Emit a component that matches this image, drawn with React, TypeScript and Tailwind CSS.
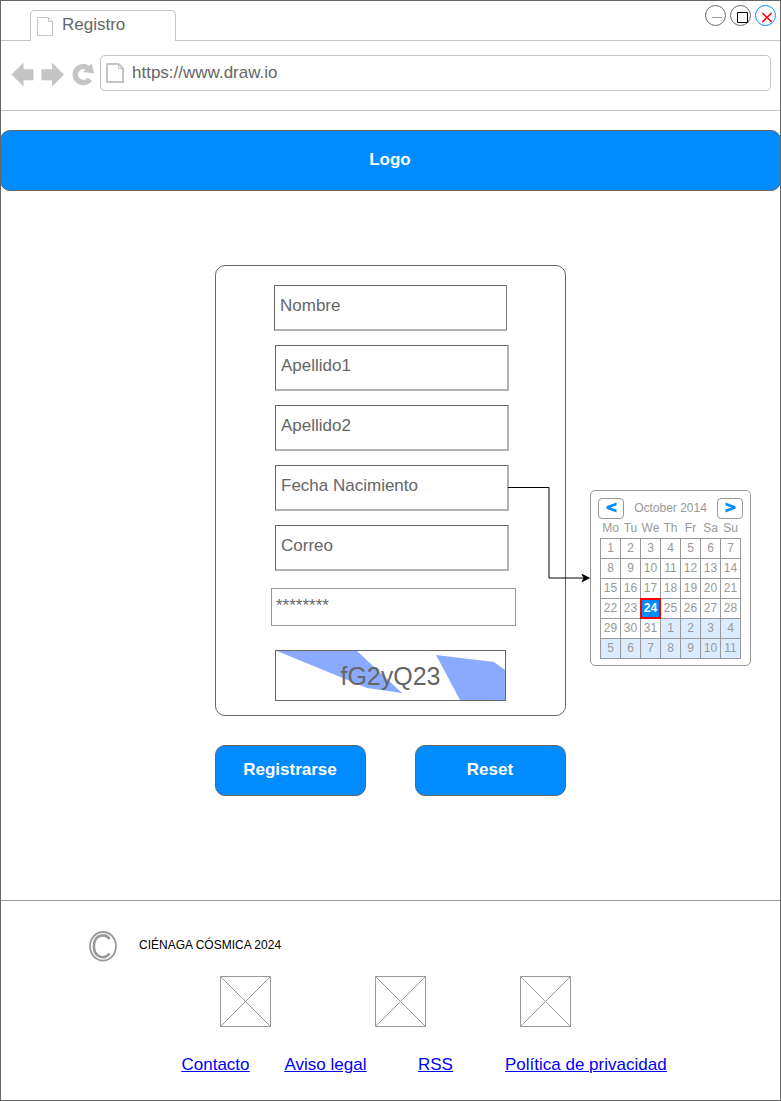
import React from "react";

const Page = ({ className, thick }: { className: string; thick?: boolean }) => (
  <svg className={className} viewBox={thick ? "0 0 18 20" : "0 0 16 19"} fill="none" stroke="#c4c4c4">
    {thick ? (
      <>
        <path d="M1 1H12.5L17 5.5V19H1Z" strokeWidth="2" />
        <path d="M12.5 1V5.5H17" strokeWidth="1" />
      </>
    ) : (
      <path d="M.5 .5H11.5L15.5 4.5V18.5H.5ZM11.5 .5V4.5H15.5" strokeWidth="1" />
    )}
  </svg>
);

function WindowButtons() {
  return (
    <div className="mt-1 mr-1 flex gap-1">
      <svg className="h-[21px] w-[21px]" viewBox="0 0 21 21" fill="none">
        <circle cx="10.5" cy="10.5" r="10" stroke="#666" />
        <path d="M7 12.5H17" stroke="#999" />
      </svg>
      <svg className="h-[21px] w-[21px]" viewBox="0 0 21 21" fill="none">
        <circle cx="10.5" cy="10.5" r="10" stroke="#666" />
        <path d="M7.5 7.5H17.5V17.5H7.5Z" stroke="#000" />
      </svg>
      <svg className="h-[21px] w-[21px]" viewBox="0 0 21 21" fill="none">
        <circle cx="10.5" cy="10.5" r="10" stroke="#008cff" />
        <path d="M7.3 8L16.7 17M16.7 8L7.3 17" stroke="#f00" strokeWidth="1.6" />
      </svg>
    </div>
  );
}

function Browser() {
  return (
    <header className="text-[17px] leading-5 text-[#666]">
      <div className="flex h-10 justify-between border-b border-[#c4c4c4]">
        <div className="mt-[9px] ml-[29px] flex h-[31px] w-[146px] rounded-t-[5px] border border-b-0 border-[#c4c4c4] bg-white">
          <Page className="mt-1.5 ml-1.5 h-[19px] w-4" />
          <span className="mt-1 ml-[9px]">Registro</span>
        </div>
        <WindowButtons />
      </div>
      <div className="flex h-[70px] border-b border-[#c4c4c4]">
        <svg className="mt-5 ml-[10px] h-[28px] w-[84px] shrink-0" viewBox="0 0 84 28" fill="#c4c4c4">
          <path d="M.5 13.5L12.5 1.5V8.2H22.5V19.2H12.5V25.5Z" />
          <path d="M53 13.5L41 1.5V8.2H30.5V19.2H41V25.5Z" />
          <path d="M78.8 18.2A8 8 0 1 1 77.5 7.5" fill="none" stroke="#c4c4c4" strokeWidth="5.4" />
          <path d="M80.8 2.5L83 12.5L72 11Z" />
        </svg>
        <div className="mt-[14px] ml-[5px] flex h-9 w-[671px] rounded-[5px] border border-[#c4c4c4]">
          <Page thick className="mt-[7px] ml-[5px] h-5 w-[18px]" />
          <span className="mt-[7px] ml-2">https://www.draw.io</span>
        </div>
      </div>
    </header>
  );
}

const Field = ({ label }: { label: string }) => (
  <div className="h-[46px] w-[234px] border border-r-2 border-b-2 border-[#666] border-r-[#b2b2b2] border-b-[#b2b2b2] pt-[9px] pl-[5px] first:-ml-px first:w-[233px] first:border-r first:border-r-[#808080]">
    {label}
  </div>
);

const Action = ({ label }: { label: string }) => (
  <button className="h-[51px] w-[151px] rounded-[10px] border border-[#666] bg-[#008cff] pr-px pb-[2px] text-[17px] font-bold text-white">
    {label}
  </button>
);

const days = [...Array.from({ length: 31 }, (_, i) => i + 1), ...Array.from({ length: 11 }, (_, i) => i + 1)];

const CalendarButton = ({ next }: { next?: boolean }) => (
  <button className="flex h-[21px] w-[26px] items-center justify-center rounded-[4px] border border-[#999]">
    <svg className="mb-[2px] h-[11px] w-[11px]" viewBox="0 0 11 11" fill="#008cff">
      {next ? (
        <path d="M.5 .5L10.5 4.3V6.7L.5 10.5V7.6L6.7 5.5L.5 3.4Z" />
      ) : (
        <path d="M10.5 .5L.5 4.3V6.7L10.5 10.5V7.6L4.3 5.5L10.5 3.4Z" />
      )}
    </svg>
  </button>
);

function Calendar() {
  return (
    <section className="mt-[225px] ml-6 h-[176px] w-[161px] rounded-[5px] border border-[#999] pt-[7px] text-[12px] leading-[14px] text-[#999]">
      <div className="ml-[7px] flex w-[145px] items-start justify-between">
        <CalendarButton />
        <span className="mt-[3px] whitespace-nowrap">October 2014</span>
        <CalendarButton next />
      </div>
      <div className="ml-[9.5px] grid w-[140px] grid-cols-7 text-center">
        {["Mo", "Tu", "We", "Th", "Fr", "Sa", "Su"].map((d) => (
          <span key={d} className="mt-[2px] h-[17px]">{d}</span>
        ))}
      </div>
      <div className="ml-[9px] grid w-[141px] grid-cols-7 border-t border-l border-[#999] text-center">
        {days.map((d, i) => (
          <div
            key={i}
            className={
              i === 23
                ? "relative z-10 -mt-px -ml-px h-[21px] w-[21px] border-2 border-[#f00] bg-[#008cff] pt-px font-bold text-white"
                : i > 30
                  ? "h-5 w-5 border-r border-b border-[#999] bg-[#dcecff] pt-[2px]"
                  : "h-5 w-5 border-r border-b border-[#999] pt-[2px]"
            }
          >
            {d}
          </div>
        ))}
      </div>
    </section>
  );
}

const Placeholder = () => (
  <svg className="h-[51px] w-[51px]" viewBox="0 0 51 51" fill="none" stroke="#999">
    <path d="M.5 .5H50.5V50.5H.5ZM.5 .5L50.5 50.5M50.5 .5L.5 50.5" />
  </svg>
);

export default function App() {
  return (
    <div className="flex h-[1101px] w-[781px] flex-col border border-[#666] bg-white font-['Liberation_Sans',Arial,sans-serif]">
      <Browser />
      <div className="-mx-px mt-[19px] flex h-[61px] shrink-0 items-center justify-center rounded-[10px] border border-[#666] bg-[#008cff] pr-px pb-[2px] text-[17px] font-bold text-white">
        Logo
      </div>
      <main className="relative mt-[74px] flex h-[635px] shrink-0 pl-[214px]">
        <div className="w-[351px] shrink-0">
          <form className="h-[451px] rounded-[10px] border border-[#666] pt-[19px] text-[17px] leading-[21px] text-[#666]">
            <div className="ml-[59px] flex flex-col gap-[14px]">
              <Field label="Nombre" />
              <Field label="Apellido1" />
              <Field label="Apellido2" />
              <Field label="Fecha Nacimiento" />
              <Field label="Correo" />
            </div>
            <div className="mt-[17px] ml-[55px] h-[38px] w-[245px] border border-[#999] pt-[6px] pl-1">********</div>
            <div className="mt-6 ml-[59px] grid h-[51px] w-[231px] place-items-center border border-[#666] text-[25px]">
              <svg className="col-start-1 row-start-1 h-[49px] w-[229px]" viewBox="0 0 229 49" fill="#8aaaff">
                <path d="M1 0H81L126 42L91 37Z" />
                <path d="M160 4L218 11L229 19V49H184Z" />
              </svg>
              <span className="z-10 col-start-1 row-start-1 pt-[2px]">fG2yQ23</span>
            </div>
          </form>
          <div className="mt-[29px] flex justify-between">
            <Action label="Registrarse" />
            <Action label="Reset" />
          </div>
        </div>
        <Calendar />
        <svg className="absolute top-[215px] left-[506px] h-[110px] w-[84px]" viewBox="0 0 84 110" fill="none">
          <path d="M1 7.5H42V98H77" stroke="#000" />
          <path d="M82.5 98L75 101.7L77 98L75 94.3Z" fill="#000" stroke="#000" strokeWidth=".8" />
        </svg>
      </main>
      <footer className="flex-1 border-t border-[#999]">
        <div className="mt-[30px] ml-[87px] flex">
          <svg className="h-[31px] w-[29px]" viewBox="0 0 29 31" fill="none" stroke="#999">
            <ellipse cx="15" cy="15.3" rx="13" ry="14.3" strokeWidth="1.8" />
            <path d="M21.6 8C17.5 2.3 6 2.8 5.9 15.3C6 27.8 17.5 28.3 21.6 22.6" strokeWidth="2.6" />
          </svg>
          <span className="mt-[7px] ml-[22px] text-[12px] leading-[14px] text-black">CIÉNAGA CÓSMICA 2024</span>
        </div>
        <div className="mt-[14px] ml-[219px] flex">
          <Placeholder />
          <div className="mr-[94px] ml-[104px] flex"><Placeholder /></div>
          <Placeholder />
        </div>
        <nav className="mt-[28px] ml-[180.5px] flex text-[17px] leading-5 text-[#00f] underline">
          <a className="w-[103px]">Contacto</a>
          <a className="w-[133.5px]">Aviso legal</a>
          <a className="w-[87px]">RSS</a>
          <a>Política de privacidad</a>
        </nav>
      </footer>
    </div>
  );
}
